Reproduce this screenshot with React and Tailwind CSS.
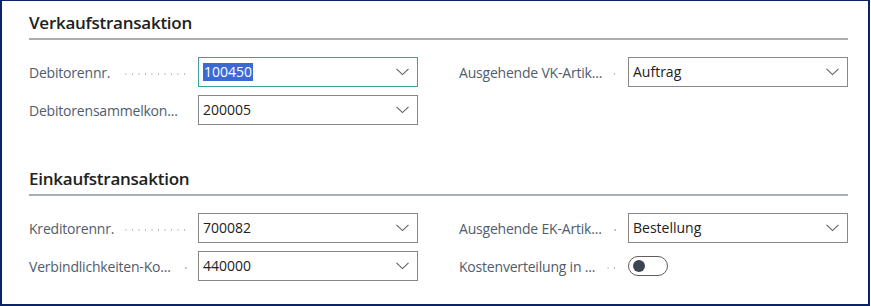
import React from 'react'

const font = { fontFamily: '"Open Sans", "Noto Sans", sans-serif' }

const Chevron = () => (
  <svg width="13" height="8" viewBox="0 0 13 8" className="shrink-0">
    <path d="M0.5 0.8 L6.5 6.6 L12.5 0.8" fill="none" stroke="#605e5c" strokeWidth="1.1" />
  </svg>
)

const Leader = () => (
  <span className="flex-1 h-[4px] ml-[10px] mr-[10px] mt-[4px] bg-[radial-gradient(circle,#bdbdbd_0.7px,transparent_1px)] bg-[length:6.5px_4px] bg-right bg-repeat-x" />
)

const Field = ({ label, value, focused, toggle }) => (
  <div className="flex items-center h-[30px]">
    <div className="flex items-center w-[169px] shrink-0">
      <span className="text-[14px] text-[#505c6d] whitespace-nowrap tracking-[-0.2px]">{label}</span>
      <Leader />
    </div>
    {toggle ? (
      <div className="w-[40px] h-[20px] rounded-full border border-[#605e5c] flex items-center pl-[4px]">
        <span className="w-[12px] h-[12px] rounded-full bg-[#3d4452]" />
      </div>
    ) : (
      <div
        className={`flex-1 h-[30px] flex items-center justify-between pl-[4px] pr-[8px] bg-white border ${
          focused ? 'border-[#3aa39c]' : 'border-[#8a8886]'
        }`}
      >
        <span className={`text-[14px] leading-[18px] ${focused ? 'bg-[#3b6ad6] text-white px-[1px]' : 'text-[#212121]'}`}>
          {value}
        </span>
        <Chevron />
      </div>
    )}
  </div>
)

const Section = ({ title, left, right, className }) => (
  <div className={className}>
    <h2 className="text-[17px] tracking-[-0.25px] font-semibold text-[#212121] leading-[28px] pb-[1px] border-b-2 border-[#a9aeb6]">
      {title}
    </h2>
    <div className="grid grid-cols-2 gap-x-[41px] mt-[17px]">
      <div className="flex flex-col gap-[8px]">
        {left.map((f) => (
          <Field key={f.label} {...f} />
        ))}
      </div>
      <div className="flex flex-col gap-[8px]">
        {right.map((f) => (
          <Field key={f.label} {...f} />
        ))}
      </div>
    </div>
  </div>
)

export default function App() {
  return (
    <div
      style={font}
      className="w-[870px] h-[306px] bg-white border-t border-x-2 border-b-2 border-[#0b2463] pl-[27px] pr-[20px] pt-[8px]"
    >
      <Section
        title="Verkaufstransaktion"
        left={[
          { label: 'Debitorennr.', value: '100450', focused: true },
          { label: 'Debitorensammelkon...', value: '200005' },
        ]}
        right={[{ label: 'Ausgehende VK-Artik...', value: 'Auftrag' }]}
      />
      <Section
        className="mt-[40px]"
        title="Einkaufstransaktion"
        left={[
          { label: 'Kreditorennr.', value: '700082' },
          { label: 'Verbindlichkeiten-Ko...', value: '440000' },
        ]}
        right={[
          { label: 'Ausgehende EK-Artik...', value: 'Bestellung' },
          { label: 'Kostenverteilung in ...', toggle: true },
        ]}
      />
    </div>
  )
}
